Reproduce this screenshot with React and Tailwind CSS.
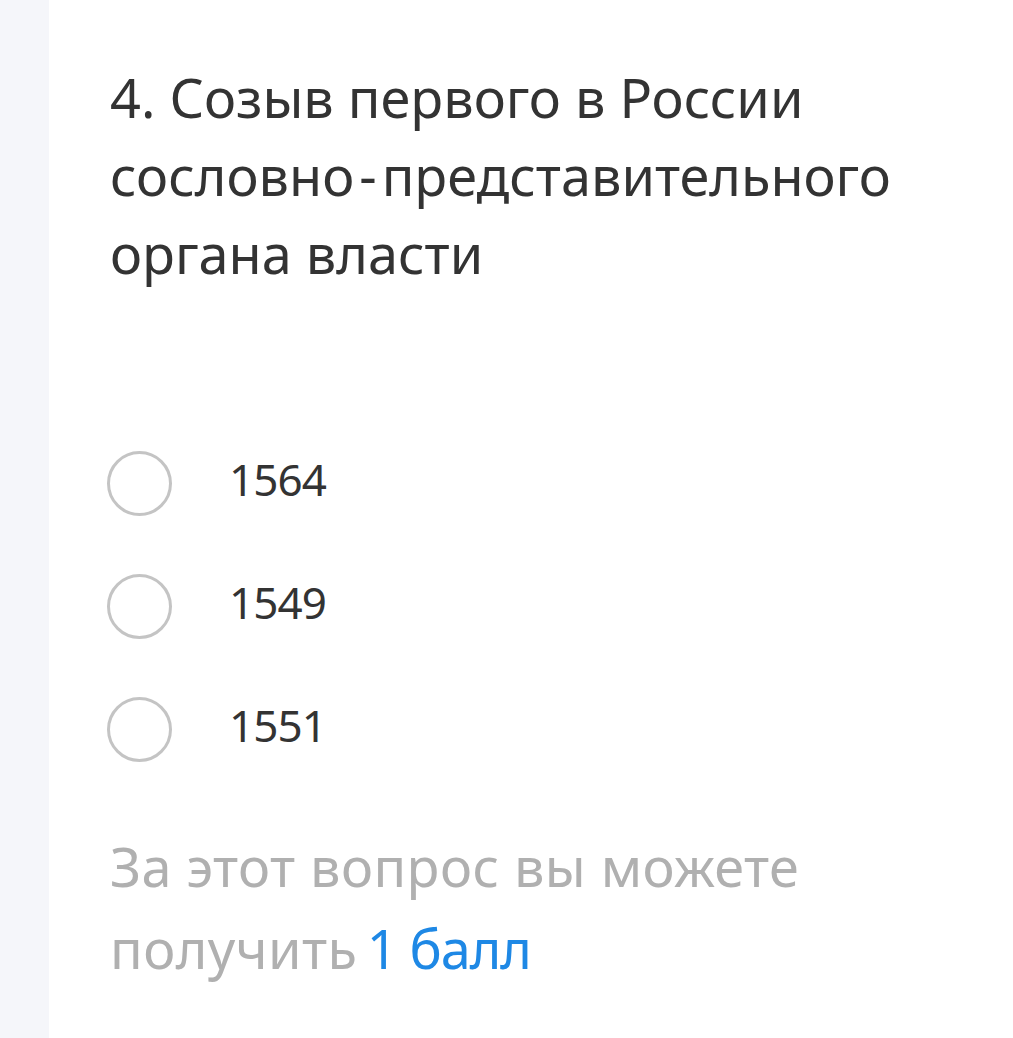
export default function App() {
  const options = ['1564', '1549', '1551']

  return (
    <div className="flex min-h-[1038px] bg-white" style={{ fontFamily: '"Noto Sans", "Open Sans", sans-serif' }}>
      {/* left rail */}
      <div className="w-[49px] shrink-0 bg-[#f5f6fa]" />

      <div className="flex-1 pl-[61px] pr-[30px] pt-[58px]">
        <h2 className="text-[54px] leading-[78px] font-normal text-[#333333]">
          4. Созыв первого в России
          <br />
          сословно<span className="mx-[5px]">-</span>представительного
          <br />
          органа власти
        </h2>

        <div className="mt-[159px] -ml-[3px] flex flex-col gap-[58px]">
          {options.map(opt => (
            <label key={opt} className="flex items-center gap-[57px]">
              <span className="h-[65px] w-[65px] shrink-0 rounded-full border-[3px] border-[#c4c4c4]" />
              <span className="pb-[10px] text-[44px] leading-[54px] tracking-[-0.02em] text-[#333333]">{opt}</span>
            </label>
          ))}
        </div>

        <p className="mt-[63px] text-[54px] leading-[82px] tracking-[0.008em] text-[#b0b0b0]">
          За этот вопрос вы можете
          <br />
          получить <span className="-ml-[5px] tracking-[-0.02em] text-[#1e88e5]">1 балл</span>
        </p>
      </div>
    </div>
  )
}
